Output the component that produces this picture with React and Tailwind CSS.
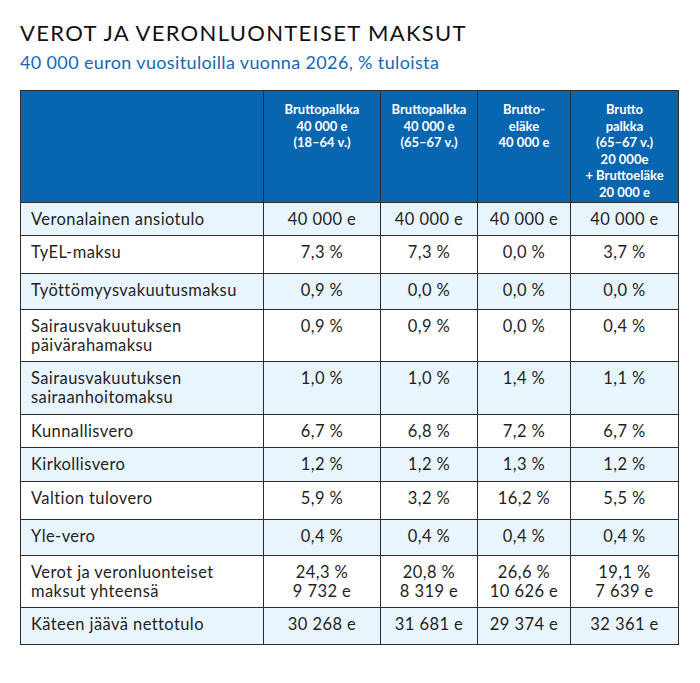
const HEADERS = [
  ['Bruttopalkka', '40 000 e', '(18–64 v.)'],
  ['Bruttopalkka', '40 000 e', '(65–67 v.)'],
  ['Brutto-', 'eläke', '40 000 e'],
  ['Brutto', 'palkka', '(65–67 v.)', '20 000e', '+ Bruttoeläke', '20 000 e'],
];

const ROWS = [
  { label: ['Veronalainen ansiotulo'], values: ['40 000 e', '40 000 e', '40 000 e', '40 000 e'], h: 'h-[33px]' },
  { label: ['TyEL-maksu'], values: ['7,3 %', '7,3 %', '0,0 %', '3,7 %'], h: 'h-[38px]' },
  { label: ['Työttömyysvakuutusmaksu'], values: ['0,9 %', '0,0 %', '0,0 %', '0,0 %'], h: 'h-[36px]' },
  { label: ['Sairausvakuutuksen', 'päivärahamaksu'], values: ['0,9 %', '0,9 %', '0,0 %', '0,4 %'], h: 'h-[52px]' },
  { label: ['Sairausvakuutuksen', 'sairaanhoitomaksu'], values: ['1,0 %', '1,0 %', '1,4 %', '1,1 %'], h: 'h-[53px]' },
  { label: ['Kunnallisvero'], values: ['6,7 %', '6,8 %', '7,2 %', '6,7 %'], h: 'h-[33px]' },
  { label: ['Kirkollisvero'], values: ['1,2 %', '1,2 %', '1,3 %', '1,2 %'], h: 'h-[34px]' },
  { label: ['Valtion tulovero'], values: ['5,9 %', '3,2 %', '16,2 %', '5,5 %'], h: 'h-[38px]' },
  { label: ['Yle-vero'], values: ['0,4 %', '0,4 %', '0,4 %', '0,4 %'], h: 'h-[36px]' },
  { label: ['Verot ja veronluonteiset', 'maksut yhteensä'], values: [['24,3 %', '9 732 e'], ['20,8 %', '8 319 e'], ['26,6 %', '10 626 e'], ['19,1 %', '7 639 e']], h: 'h-[52px]' },
  { label: ['Käteen jäävä nettotulo'], values: ['30 268 e', '31 681 e', '29 374 e', '32 361 e'], h: 'h-[37px]' },
];

const COL_W = ['w-[243px]', 'w-[117px]', 'w-[97px]', 'w-[93px]', 'w-[108px]'];

function Lines({ lines }) {
  return (Array.isArray(lines) ? lines : [lines]).map((l, i) => <div key={i}>{l}</div>);
}

export default function App() {
  return (
    <div className="w-[700px] h-[683px] bg-white pt-[19px] pl-[20px] font-['Lato','Liberation_Sans',sans-serif]">
      <h1 className="text-[22px] leading-[28px] tracking-[0.06em] text-[#111]">VEROT JA VERONLUONTEISET MAKSUT</h1>
      <p className="mt-[4px] text-[18px] leading-[22px] tracking-[0.02em] text-[#1668b5]">40 000 euron vuosituloilla vuonna 2026, % tuloista</p>

      <table className="mt-[17px] border-collapse table-fixed w-[658px] text-[#1f1f1f]">
        <thead>
          <tr className="h-[112px] bg-[#0866b1]">
            <th className={`${COL_W[0]} border border-[#2d2d2d]`}></th>
            {HEADERS.map((h, i) => (
              <th
                key={i}
                className={`${COL_W[i + 1]} border border-[#2d2d2d] align-top pt-[10px] text-white font-bold text-[13px] leading-[16.5px]`}
              >
                <Lines lines={h} />
              </th>
            ))}
          </tr>
        </thead>
        <tbody>
          {ROWS.map((r, i) => (
            <tr key={i} className={`${r.h} ${i % 2 === 0 ? 'bg-[#e9f5fd]' : 'bg-white'}`}>
              <td className="border border-[#2d2d2d] align-top pt-[7px] pl-[10px] text-[16.5px] leading-[19px] tracking-[0.025em]">
                <Lines lines={r.label} />
              </td>
              {r.values.map((v, j) => (
                <td key={j} className="border border-[#2d2d2d] align-top pt-[7px] text-center text-[16.5px] leading-[19px] tracking-[0.025em]">
                  <Lines lines={v} />
                </td>
              ))}
            </tr>
          ))}
        </tbody>
      </table>
    </div>
  );
}
